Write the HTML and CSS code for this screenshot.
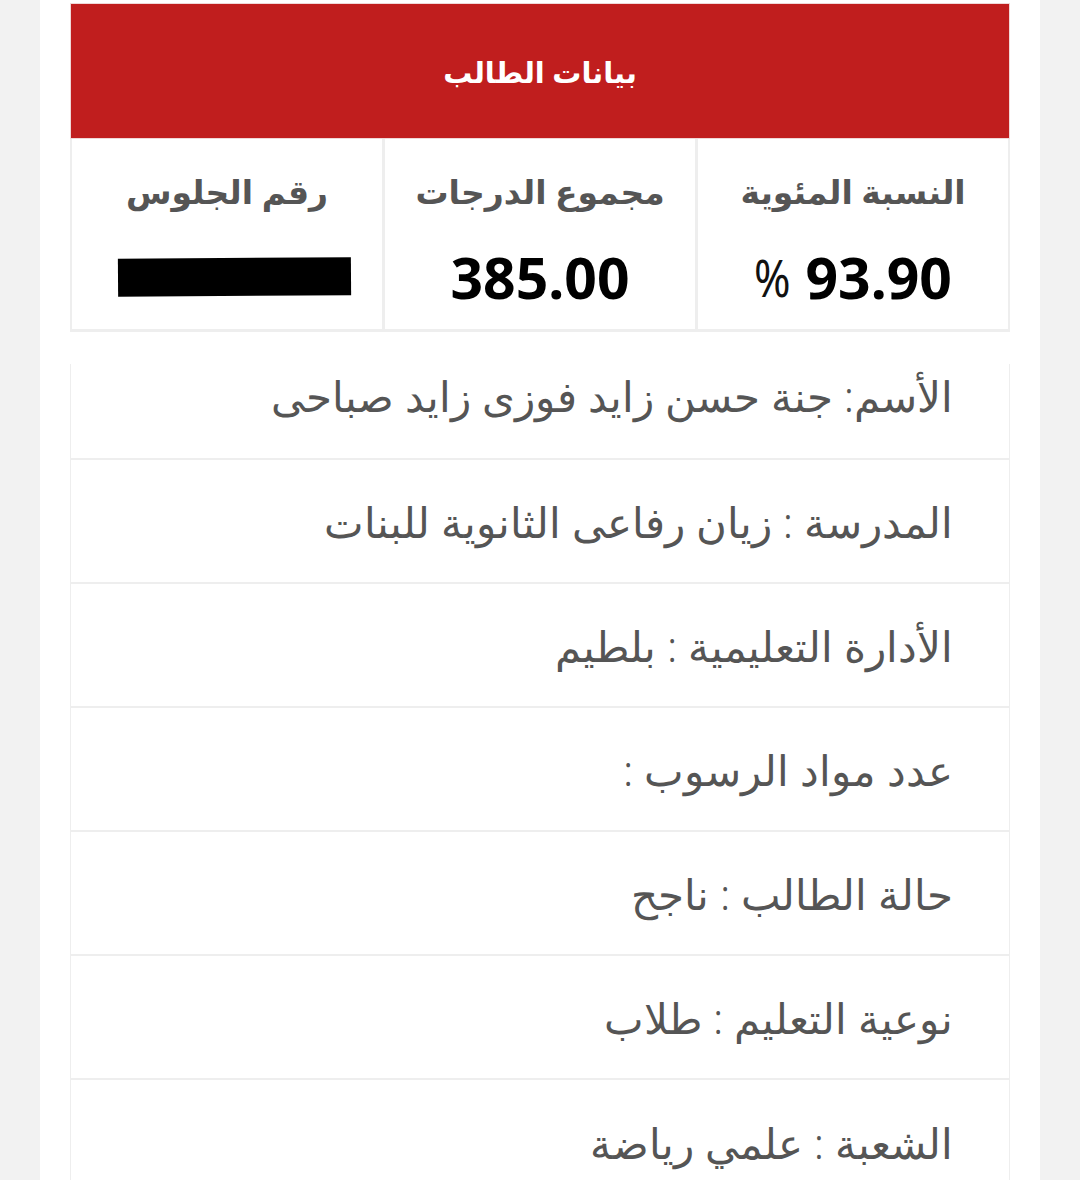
FILE: index.html
```html
<!DOCTYPE html>
<html lang="ar" dir="rtl">
<head>
<meta charset="utf-8">
<title>بيانات الطالب</title>
<link rel="stylesheet" href="styles.css">
</head>
<body>
<div class="page">
  <div class="card">
    <div class="head">بيانات الطالب</div>
    <div class="stats">
      <div class="stat">
        <div class="label">النسبة المئوية</div>
        <div class="value ltr"><span class="pct">%</span>&nbsp;93.90</div>
      </div>
      <div class="stat">
        <div class="label">مجموع الدرجات</div>
        <div class="value">385.00</div>
      </div>
      <div class="stat">
        <div class="label">رقم الجلوس</div>
        <div class="value"><span class="redact"></span></div>
      </div>
    </div>
    <div class="rows">
      <div class="row first">الأسم: جنة حسن زايد فوزى زايد صباحى</div>
      <div class="row">المدرسة : زيان رفاعى الثانوية للبنات</div>
      <div class="row">الأدارة التعليمية : بلطيم</div>
      <div class="row">عدد مواد الرسوب :</div>
      <div class="row">حالة الطالب : ناجح</div>
      <div class="row">نوعية التعليم : طلاب</div>
      <div class="row last">الشعبة : علمي رياضة</div>
    </div>
  </div>
</div>
</body>
</html>
```

FILE: styles.css
```css
html, body {
  margin: 0;
  padding: 0;
  background: #f2f2f2;
}
body {
  font-family: "Noto Sans", "DejaVu Sans", sans-serif;
}
.page {
  width: 1000px;
  min-height: 1180px;
  margin: 0 auto;
  background: #ffffff;
  padding: 3px 30px 0;
  box-sizing: border-box;
}
.card {
  width: 940px;
}
.head {
  height: 136px;
  box-sizing: border-box;
  background: #c01e1e;
  border: 1px solid #f0d8d8;
  color: #ffffff;
  font-size: 29px;
  font-weight: bold;
  display: flex;
  align-items: center;
  justify-content: center;
}
.stats {
  display: grid;
  grid-template-columns: 1fr 1fr 1fr;
  gap: 3px;
  background: #eeeeee;
  padding: 0 2px 3px;
  height: 193px;
  box-sizing: border-box;
}
.stat {
  background: #ffffff;
  display: flex;
  flex-direction: column;
  align-items: center;
  padding-top: 28px;
  box-sizing: border-box;
}
.label {
  color: #555555;
  font-size: 33px;
  font-weight: bold;
  height: 50px;
  line-height: 50px;
}
.value {
  margin-top: 30px;
  color: #000000;
  font-size: 57px;
  font-weight: bold;
  height: 60px;
  line-height: 60px;
  display: flex;
  align-items: center;
}
.ltr {
  direction: ltr;
}
.pct {
  font-size: 44px;
  font-weight: normal;
  color: #111111;
  transform: scaleY(1.15);
  display: inline-block;
}
.redact {
  display: block;
  width: 233px;
  height: 38px;
  background: #000000;
  transform: translateX(7px) rotate(-0.4deg);
}
.rows {
  margin-top: 32px;
}
.row {
  height: 124px;
  box-sizing: border-box;
  border-left: 1px solid #eeeeee;
  border-right: 1px solid #eeeeee;
  border-bottom: 2px solid #eeeeee;
  display: flex;
  align-items: center;
  padding-right: 56px;
  color: #555555;
  font-size: 42px;
  font-weight: 300;
}
.row.first {
  height: 96px;
  align-items: flex-start;
  padding-top: 3px;
}
.row.last {
  border-bottom: none;
}
```
